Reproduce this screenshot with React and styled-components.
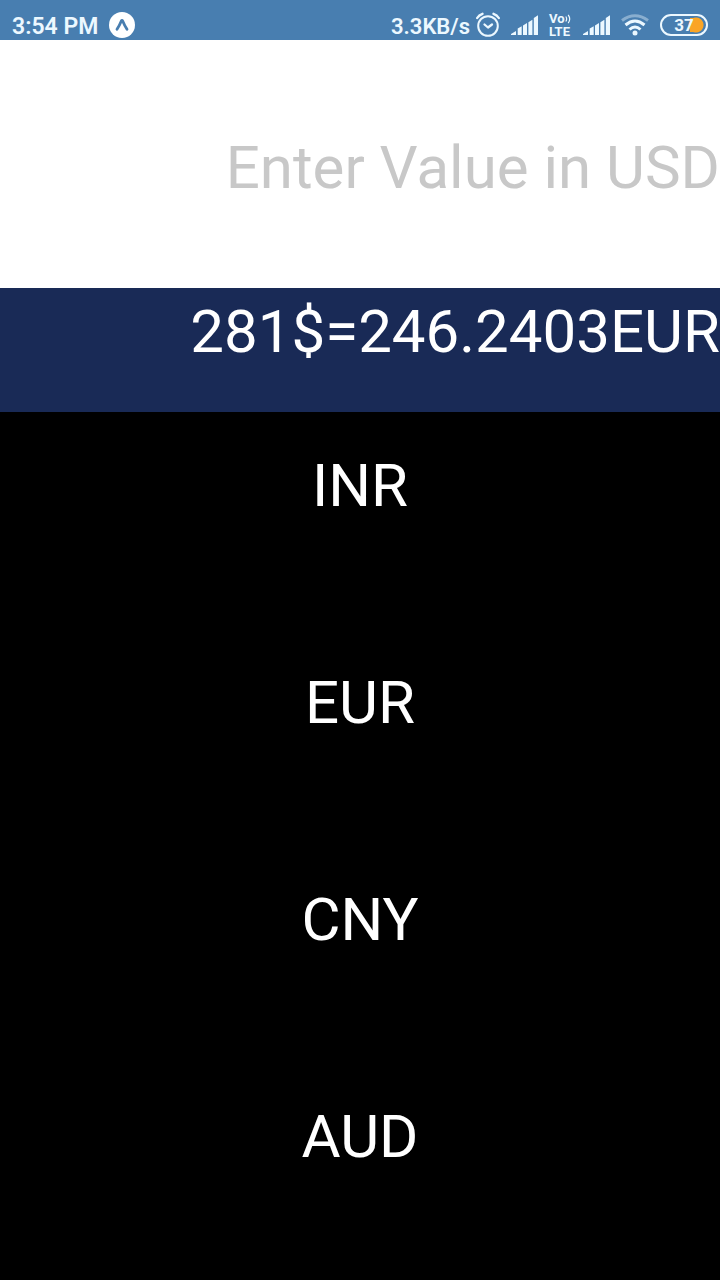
import React, { useState } from 'react';
import styled, { createGlobalStyle } from 'styled-components';

const GlobalStyle = createGlobalStyle`
  *, *::before, *::after { box-sizing: border-box; }
  body {
    margin: 0;
    background: #000;
    font-family: Roboto, "Liberation Sans", sans-serif;
  }
`;

const Screen = styled.div`
  display: grid;
  grid-template-columns: 100%;
  grid-template-rows: 40px 2fr 1fr 7fr;
  min-height: 100vh;
`;

const StatusBar = styled.header`
  display: flex;
  justify-content: space-between;
  padding: 10px 12px 0;
  background: #487eb0;
  color: #ecf8ff;
`;

const StatusGroup = styled.div`
  display: flex;
  align-items: center;
  gap: 11px;
  height: 30px;
`;

const StatusText = styled.span`
  padding-top: 4px;
  font-size: ${({ $size }) => $size}px;
  font-weight: 600;
  line-height: 26px;
  white-space: nowrap;
`;

const Icon = styled.svg`
  display: block;
  flex: none;
`;

const SpeedGroup = styled.div`
  display: flex;
  align-items: center;
  gap: 6px;
`;

const Volte = styled.div`
  display: flex;
  flex-direction: column;
  width: 23px;
  font-size: 13px;
  font-weight: 700;
  line-height: 13px;
`;

const VolteTop = styled.span`
  display: flex;
  align-items: center;
`;

const Battery = styled.div`
  display: flex;
  align-items: center;
  justify-content: center;
  width: 48px;
  height: 22px;
  border: 2px solid #ecf8ff;
  border-radius: 11px;
  background: radial-gradient(circle at 34px 9px, #faa526 7px, transparent 8px),
    linear-gradient(#faa526, #faa526) 28px 2px / 7px 14px no-repeat;
  font-size: 17px;
  font-weight: 700;
  line-height: 18px;
`;

const ValueSection = styled.main`
  display: flex;
  background: #fff;
`;

const ValueInput = styled.input`
  width: 100%;
  min-width: 0;
  padding: 6px 0 0;
  border: 0;
  outline: 0;
  background: transparent;
  color: #000;
  font: inherit;
  font-size: 60px;
  text-align: right;

  &::placeholder {
    color: #c8c8c8;
    opacity: 1;
  }
`;

const ResultSection = styled.output`
  padding-top: 9px;
  background: #192a56;
  color: #fff;
  font-size: 60px;
  line-height: 70px;
  text-align: right;
`;

const CurrencyList = styled.nav`
  display: flex;
  flex-direction: column;
  background: #000;
`;

const CurrencyButton = styled.button`
  display: flex;
  flex: 1;
  align-items: flex-start;
  justify-content: center;
  padding: 39px 0 0;
  border: 0;
  background: transparent;
  color: #fff;
  font: inherit;
  font-size: 60px;
  line-height: 70px;
  cursor: pointer;
`;

const rates = { INR: 71.0, EUR: 0.8763, CNY: 6.74, AUD: 1.39 };

function AppBadge() {
  return (
    <Icon width="26" height="26" viewBox="0 0 26 26" aria-hidden="true">
      <circle cx="13" cy="13" r="13" fill="#fff" />
      <path d="M8 17.300Q10.200 14 12.200 9.200Q13 7.800 13.800 9.200Q15.800 14 18 17.300" fill="none" stroke="#487eb0" strokeWidth="2.800" strokeLinecap="round" strokeLinejoin="round" />
    </Icon>
  );
}

function AlarmIcon() {
  return (
    <Icon width="24" height="26" viewBox="0 0 24 26" fill="none" stroke="currentColor" strokeWidth="2" strokeLinecap="round" strokeLinejoin="round" aria-hidden="true">
      <circle cx="12" cy="14" r="9.800" />
      <path d="M1.200 6Q3 3 6.500 1.800M17.500 1.800Q21 3 22.800 6" strokeWidth="2.400" />
      <path d="M8.500 12.500l3.500 3 4-3" strokeWidth="2.300" />
    </Icon>
  );
}

function SignalIcon() {
  return (
    <Icon width="27" height="20" viewBox="0 0 27 20" fill="currentColor" aria-hidden="true">
      <path d="M0 20v-1l5-3v4zM6.700 20v-6.500l4-2.300V20zM12 20v-9.600l4-2.400v12zM17.400 20V7.200l4-2.400V20zM22.800 20V3L27 .3V20z" />
    </Icon>
  );
}

function SoundWaves() {
  return (
    <Icon width="6" height="10" viewBox="0 0 6 10" fill="none" stroke="currentColor" strokeWidth="1.200" aria-hidden="true">
      <path d="M.8 2.500q1.700 2.500 0 5M3.200 .8q3 4.200 0 8.400" />
    </Icon>
  );
}

function WifiIcon() {
  return (
    <Icon width="28" height="22" viewBox="0 0 28 22" fill="none" stroke="currentColor" strokeWidth="3" aria-hidden="true">
      <path d="M1 6.500Q14-3 27 6.500" opacity=".4" />
      <path d="M4.500 11Q14 3 23.500 11M8.500 15.500Q14 10.500 19.500 15.500" />
      <circle cx="14" cy="19" r="2.500" fill="currentColor" stroke="none" />
    </Icon>
  );
}

export default function App() {
  const [value, setValue] = useState('');
  const [result, setResult] = useState('281$=246.2403EUR');

  const convert = (code) => {
    const amount = Number(value);
    if (!value || Number.isNaN(amount)) return;
    setResult(`${value}$=${(amount * rates[code]).toFixed(4)}${code}`);
    setValue('');
  };

  return (
    <>
      <GlobalStyle />
      <Screen>
        <StatusBar>
          <StatusGroup>
            <StatusText $size={23}>3:54 PM</StatusText>
            <AppBadge />
          </StatusGroup>
          <StatusGroup>
            <SpeedGroup>
              <StatusText $size={22}>3.3KB/s</StatusText>
              <AlarmIcon />
            </SpeedGroup>
            <SignalIcon />
            <Volte>
              <VolteTop>Vo<SoundWaves /></VolteTop>
              <span>LTE</span>
            </Volte>
            <SignalIcon />
            <WifiIcon />
            <Battery>37</Battery>
          </StatusGroup>
        </StatusBar>
        <ValueSection>
          <ValueInput
            aria-label="Value in USD"
            inputMode="decimal"
            placeholder="Enter Value in USD"
            value={value}
            onChange={(event) => setValue(event.target.value)}
          />
        </ValueSection>
        <ResultSection>{result}</ResultSection>
        <CurrencyList aria-label="Target currency">
          {Object.keys(rates).map((code) => (
            <CurrencyButton key={code} type="button" onClick={() => convert(code)}>
              {code}
            </CurrencyButton>
          ))}
        </CurrencyList>
      </Screen>
    </>
  );
}
